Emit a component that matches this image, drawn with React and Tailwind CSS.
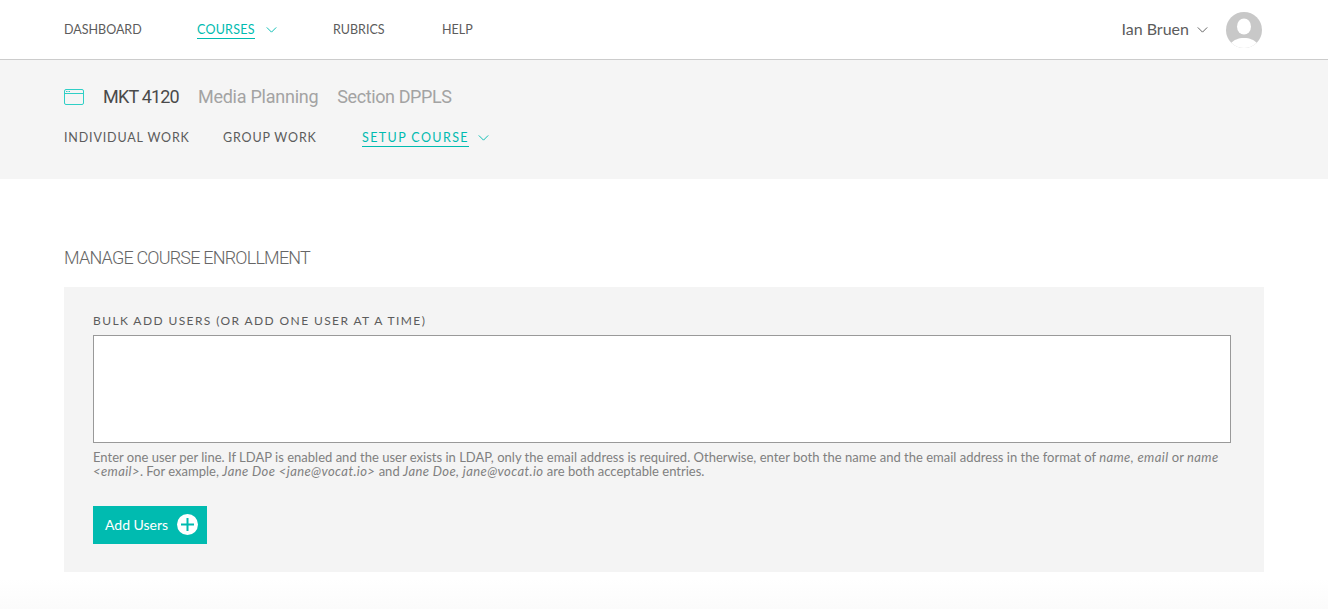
// thin chevron used in both nav bars
const Chevron = ({ className }) => (
  <svg viewBox="0 0 12 7" fill="none" stroke="currentColor" strokeWidth="1.1" className={className}>
    <path d="M0.5 0.5 L6 6 L11.5 0.5" />
  </svg>
);

const TopLink = ({ children, className = "" }) => (
  <a className={`text-[12.5px] leading-[16px] text-[#5c5c5c] ${className}`}>{children}</a>
);

const SubLink = ({ children, className = "" }) => (
  <a className={`text-[12.5px] leading-[16px] tracking-[0.85px] text-[#5c5c5c] ${className}`}>{children}</a>
);

export default function App() {
  return (
    <div className="min-h-[609px] bg-white font-['Lato','Liberation_Sans',sans-serif] overflow-hidden">
      {/* Top nav */}
      <header className="h-[60px] border-b border-[#ccc] bg-white flex items-center pl-[64px] pr-[66px]">
        <TopLink className="w-[133px]">DASHBOARD</TopLink>
        <div className="w-[136px] flex items-center">
          <a className="text-[12.5px] leading-[16px] tracking-[0.25px] pt-[1px] text-[#00bbb0] border-b border-[#00bbb0]">COURSES</a>
          <Chevron className="w-[11px] h-[6px] ml-[11px] text-[#00bbb0]" />
        </div>
        <TopLink className="w-[109px]">RUBRICS</TopLink>
        <TopLink>HELP</TopLink>
        <div className="ml-auto flex items-center">
          <span className="text-[16px] leading-[22px] pb-[2px] text-[#5c5c5c]">Ian Bruen</span>
          <Chevron className="w-[11px] h-[6px] ml-[8px] text-[#5c5c5c]" />
          <div className="w-[36px] h-[36px] ml-[18px] rounded-full bg-[#c8c8c8] overflow-hidden">
            <svg viewBox="0 0 36 36" className="w-[36px] h-[36px]">
              <ellipse cx="18" cy="14.5" rx="7" ry="8" fill="#fff" />
              <path d="M5 31 C8 28 12 26 18 26 C24 26 28 28 31 31 L33 36 L3 36 Z" fill="#fff" />
            </svg>
          </div>
        </div>
      </header>

      {/* Course header */}
      <section className="h-[119px] bg-[#f5f5f5] pl-[64px]">
        <div className="flex items-center pt-[25px] h-[49px] font-['Roboto',sans-serif]">
          <svg viewBox="0 0 20 16" fill="none" className="w-[20px] h-[16px]">
            <rect x="0.5" y="0.5" width="19" height="15" rx="1.5" stroke="#2fcfc6" />
            <path d="M0.5 4.5 H19.5" stroke="#2fcfc6" />
            <path d="M2 2.5 H3.5 M4.5 2.5 H6" stroke="#2fcfc6" />
          </svg>
          <span className="ml-[19px] text-[18px] leading-[24px] tracking-[-0.8px] text-[#4a4a4a]">MKT 4120</span>
          <span className="ml-[19px] text-[18px] leading-[24px] tracking-[-0.25px] text-[#a3a3a3]">Media Planning</span>
          <span className="ml-[19px] text-[18px] leading-[24px] tracking-[-0.4px] text-[#a3a3a3]">Section DPPLS</span>
        </div>
        <div className="flex items-center mt-[20px]">
          <SubLink className="w-[159px]">INDIVIDUAL WORK</SubLink>
          <SubLink className="w-[139px]">GROUP WORK</SubLink>
          <a className="text-[12.5px] leading-[16px] pt-[1px] tracking-[1.4px] text-[#00bbb0] border-b border-[#00bbb0]">SETUP COURSE</a>
          <Chevron className="w-[11px] h-[6px] ml-[9px] text-[#00bbb0]" />
        </div>
      </section>

      {/* Enrollment */}
      <main className="px-[64px] pt-[67px] pb-[37px] bg-gradient-to-b from-white from-[93%] to-[#fbfbfb]">
        <h2 className="text-[18px] leading-[24px] font-light tracking-[-0.8px] font-['Roboto',sans-serif] text-[#666]">MANAGE COURSE ENROLLMENT</h2>
        <div className="mt-[17px] h-[285px] bg-[#f4f4f4] pl-[29px] pr-[33px] pt-[26px]">
          <label className="block text-[12px] leading-[15px] tracking-[1.4px] text-[#5c5c5c]">
            BULK ADD USERS (OR ADD ONE USER AT A TIME)
          </label>
          <textarea className="block mt-[7px] w-full h-[108px] bg-white border border-[#999] resize-none outline-none" />
          <p className="mt-[7px] text-[13px] leading-[14px] tracking-[0.01px] text-[#808080]">
            Enter one user per line. If LDAP is enabled and the user exists in LDAP, only the email address is required. Otherwise, enter both the name and the email address in the format of <em className="tracking-[0.4px]">name, email</em> or <em className="tracking-[0.4px]">name &lt;email&gt;</em>. For example, <em className="tracking-[0.4px]">Jane Doe &lt;jane@vocat.io&gt;</em> and <em className="tracking-[0.4px]">Jane Doe, jane@vocat.io</em> are both acceptable entries.
          </p>
          <button className="mt-[28px] h-[38px] w-[114px] bg-[#00bbb0] flex items-center pl-[12px] pb-[2px] text-white text-[14px]">
            Add Users
            <span className="ml-[9px] w-[21px] h-[21px] rounded-full bg-white flex items-center justify-center">
              <svg viewBox="0 0 13 13" className="w-[13px] h-[13px]" stroke="#00bbb0" strokeWidth="2">
                <path d="M6.5 0 V13 M0 6.5 H13" />
              </svg>
            </span>
          </button>
        </div>
      </main>
    </div>
  );
}
